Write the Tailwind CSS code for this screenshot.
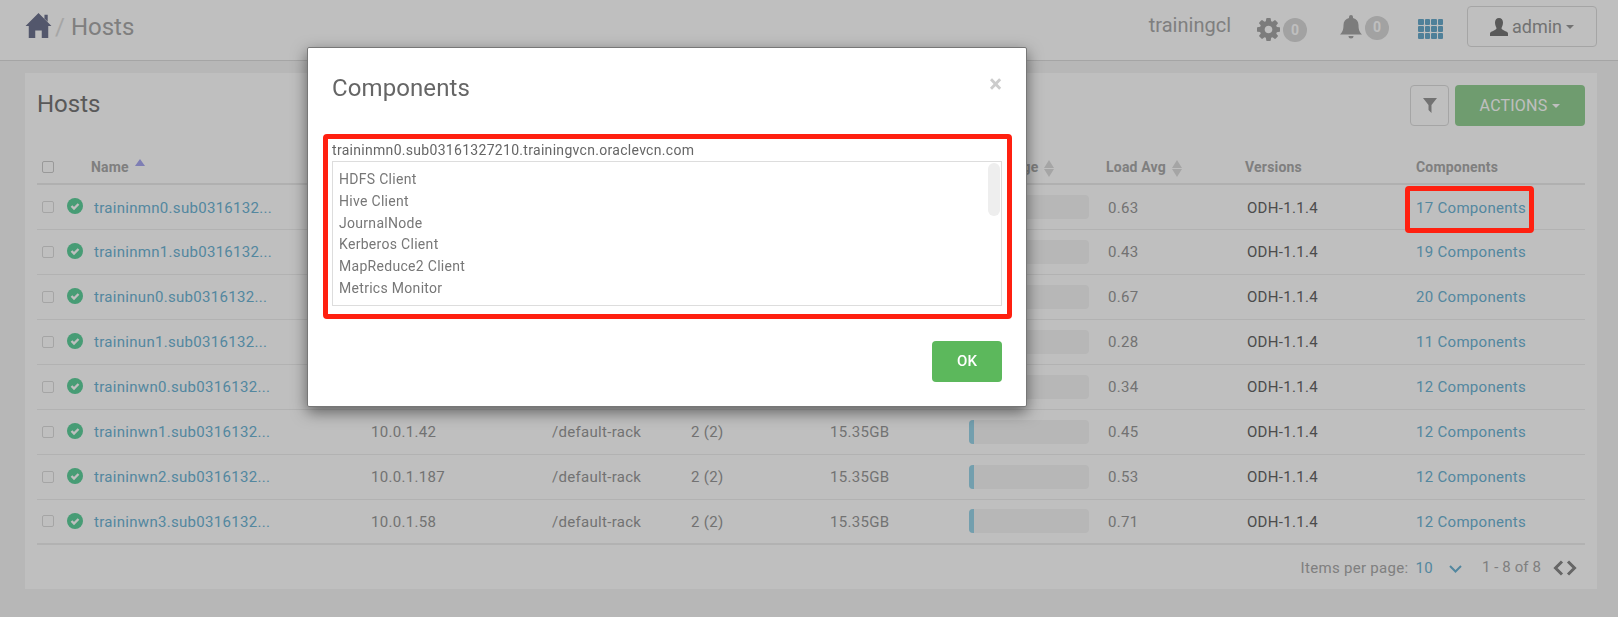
<!DOCTYPE html>
<html>
<head>
    <meta charset="UTF-8">
    <script src="https://cdn.jsdelivr.net/npm/@tailwindcss/browser@4"></script>
</head>
<body class="bg-[#f4f4f4] h-[617px] overflow-hidden text-[14px] text-[#999] font-['Roboto',sans-serif]">
    <!-- top bar -->
    <header class="h-[61px] bg-white border-b border-[#ddd] flex items-center pl-[25px] pr-[21px]">
        <svg class="w-[27px] h-[26px] mb-[11px] fill-[#6f7590]" viewBox="0 0 24 24"><path d="M12 1 24 13h-3v11h-6v-7H9v7H3V13H0Z"/><path d="M17.500 2.500h3v6.500l-3-3Z"/></svg>
        <span class="ml-[3px] mb-[7px] text-[24px] text-[#ddd]">/</span>
        <span class="ml-[6px] mb-[7px] text-[24px] text-[#aaa]">Hosts</span>
        <span class="ml-auto mb-[11px] text-[20px] text-[#aaa]">trainingcl</span>
        <svg class="ml-[26px] w-[23px] h-[23px] mt-[-1px] fill-[#a6a6a6]" viewBox="0 -128 1536 1536"><path d="M1024 640q0-106-75-181t-181-75-181 75-75 181 75 181 181 75 181-75 75-181zm512-109v222q0 12-8 23t-20 13l-185 28q-19 54-39 91 35 50 107 138 10 12 10 25t-9 23q-27 37-99 108t-94 71q-12 0-26-9l-138-108q-44 23-91 38-16 136-29 186-7 28-36 28h-222q-14 0-24.500-8.500t-11.500-21.500l-28-184q-49-16-90-37l-141 107q-10 9-25 9-14 0-25-11-126-114-165-168-7-10-7-23 0-12 8-23 15-21 51-66.500t54-70.500q-27-50-41-99l-183-27q-13-2-21-12.500t-8-23.500v-222q0-12 8-23t19-13l186-28q14-46 39-92-40-57-107-138-10-12-10-24 0-10 9-23 26-36 98.500-107.500t94.500-71.500q13 0 26 10l138 107q44-23 91-38 16-136 29-186 7-28 36-28h222q14 0 24.500 8.500t11.500 21.500l28 184q49 16 90 37l142-107q9-9 24-9 13 0 25 10 129 119 165 170 7 8 7 22 0 12-8 23-15 21-51 66.500t-54 70.500q26 50 41 98l183 28q13 2 21 12.500t8 23.500z"/></svg>
        <span class="ml-[3px] w-[24px] h-[24px] rounded-full bg-[#d8d8d8] text-white font-bold text-[14px] flex items-center justify-center">0</span>
        <svg class="ml-[32px] mb-[7px] w-[24px] h-[26px] fill-[#a6a6a6]" viewBox="0 0 24 24"><path d="M12 0a2 2 0 0 1 2 2v1c3.500.9 5.500 3.600 5.500 7 0 5.500 1.500 7.500 3.500 9.500H1c2-2 3.500-4 3.500-9.500 0-3.400 2-6.100 5.500-7V2a2 2 0 0 1 2-2Zm-2.500 21h5a2.500 2.500 0 0 1-5 0Z"/></svg>
        <span class="ml-[2px] mb-[5px] w-[24px] h-[24px] rounded-full bg-[#d8d8d8] text-white font-bold text-[14px] flex items-center justify-center">0</span>
        <div class="ml-[29px] mb-[3px] grid grid-cols-4 gap-[1px] w-[25px]">
            <i class="h-[6px] bg-[#6aabcc] rounded-[1px]"></i><i class="h-[6px] bg-[#6aabcc] rounded-[1px]"></i><i class="h-[6px] bg-[#6aabcc] rounded-[1px]"></i><i class="h-[6px] bg-[#6aabcc] rounded-[1px]"></i>
            <i class="h-[6px] bg-[#6aabcc] rounded-[1px]"></i><i class="h-[6px] bg-[#6aabcc] rounded-[1px]"></i><i class="h-[6px] bg-[#6aabcc] rounded-[1px]"></i><i class="h-[6px] bg-[#6aabcc] rounded-[1px]"></i>
            <i class="h-[6px] bg-[#6aabcc] rounded-[1px]"></i><i class="h-[6px] bg-[#6aabcc] rounded-[1px]"></i><i class="h-[6px] bg-[#6aabcc] rounded-[1px]"></i><i class="h-[6px] bg-[#6aabcc] rounded-[1px]"></i>
        </div>
        <button class="ml-[24px] mb-[7px] w-[130px] h-[41px] border border-[#ddd] rounded-[4px] flex items-center justify-center text-[18px] text-[#999]">
            <svg class="w-[18px] h-[18px] mr-[4px] fill-[#777]" viewBox="0 0 18 18"><path d="M9 0c2.500 0 4 2 4 4.500S12 9 11.500 10c0 1 .5 1.500 2.500 2.500s4 1.500 4 3V18H0v-2.500c0-1.500 2-2 4-3S6.500 11 6.500 10C6 9 5 7 5 4.500S6.500 0 9 0Z"/></svg>
            admin
            <i class="ml-[4px] border-x-[4px] border-x-transparent border-t-[4px] border-t-[#999]"></i>
        </button>
    </header>

    <main class="pt-[12px] px-[21px] pl-[25px]">
        <section class="bg-white w-[1572px] h-[516px] px-[12px]">
            <div class="h-[77px] flex justify-between pt-[12px]">
                <h1 class="text-[24px] text-[#777] mt-[1px]">Hosts</h1>
                <div class="flex gap-[6px]">
                    <button class="w-[39px] h-[41px] border border-[#ddd] rounded-[4px] flex items-center justify-center">
                        <svg class="w-[14px] h-[15px] fill-[#999]" viewBox="0 0 14 15"><path d="M0 0h14L8.500 7v8l-3-3V7Z"/></svg>
                    </button>
                    <button class="w-[130px] h-[41px] bg-[#95d195] rounded-[4px] text-white text-[16px] tracking-[0.2px] flex items-center justify-center">
                        ACTIONS<i class="ml-[5px] border-x-[4px] border-x-transparent border-t-[4px] border-t-white"></i>
                    </button>
                </div>
            </div>

            <table class="table-fixed w-[1548px] text-left border-collapse">
                <colgroup>
                    <col class="w-[23px]"><col class="w-[31px]"><col class="w-[277px]"><col class="w-[181px]"><col class="w-[139px]"><col class="w-[139px]"><col class="w-[139px]"><col class="w-[140px]"><col class="w-[139px]"><col class="w-[171px]"><col class="w-[169px]">
                </colgroup>
                <thead class="text-[14px] font-bold text-[#aaa] tracking-[0.2px]">
                    <tr class="h-[34px] border-b-2 border-[#ebebeb]">
                        <th class="pl-[5px]"><span class="block w-[12px] h-[12px] border border-[#ccc] rounded-[2px]"></span></th>
                        <th></th>
                        <th class="pt-[2px]">Name<i class="inline-block ml-[6px] mb-[6px] border-x-[5px] border-x-transparent border-b-[7px] border-b-[#a8a8f0]"></i></th>
                        <th class="pt-[2px]">IP Address</th>
                        <th class="pt-[2px]">Rack</th>
                        <th class="pt-[2px]">Cores</th>
                        <th class="pt-[2px]">RAM</th>
                        <th class="pt-[2px]">Disk Usage<span class="inline-flex flex-col gap-[1px] ml-[6px] align-middle"><i class="border-x-[5px] border-x-transparent border-b-[8px] border-b-[#ddd]"></i><i class="border-x-[5px] border-x-transparent border-t-[8px] border-t-[#ddd]"></i></span></th>
                        <th class="pt-[2px]">Load Avg<span class="inline-flex flex-col gap-[1px] ml-[6px] align-middle"><i class="border-x-[5px] border-x-transparent border-b-[8px] border-b-[#ddd]"></i><i class="border-x-[5px] border-x-transparent border-t-[8px] border-t-[#ddd]"></i></span></th>
                        <th class="pt-[2px]">Versions</th>
                        <th class="pt-[2px]">Components</th>
                    </tr>
                </thead>
                <tbody id="rows" class="text-[15px] tracking-[0.3px]"></tbody>
            </table>

            <div class="flex items-center justify-end h-[45px] pt-[2px] pr-[8px] text-[15px] tracking-[0.3px]">
                <span class="text-[#aaa]">Items per page:</span>
                <span class="ml-[7px] text-[#6fb5d5]">10</span>
                <svg class="ml-[16px] w-[13px] h-[8px] stroke-[#6fb5d5] fill-none stroke-2" viewBox="0 0 13 8"><path d="M1 1l5.500 5.500L12 1"/></svg>
                <span class="ml-[20px] mb-[2px] text-[#aaa] tracking-[0.1px]">1 - 8 of 8</span>
                <svg class="ml-[12px] mb-[2px] w-[11px] h-[16px] stroke-[#888] fill-none stroke-[3]" viewBox="0 0 11 16"><path d="M9 1.500 2.500 8 9 14.500"/></svg>
                <svg class="ml-[2px] mb-[2px] w-[11px] h-[16px] stroke-[#888] fill-none stroke-[3]" viewBox="0 0 11 16"><path d="M2 1.500 8.500 8 2 14.500"/></svg>
            </div>
        </section>
    </main>

    <!-- backdrop -->
    <div class="fixed inset-0 bg-black/25 z-10"></div>

    <!-- modal -->
    <div class="absolute z-20 left-[307px] top-[47px] w-[720px] h-[360px] bg-white border border-[#777] rounded-[2px] shadow-[0_5px_15px_rgba(0,0,0,0.5)]">
        <div class="h-[86px] pl-[24px] pr-[24px] flex justify-between">
            <h2 class="text-[24px] text-[#666] mt-[22px] tracking-[0.1px]">Components</h2>
            <span class="text-[24px] font-bold text-[#ccc] mt-[18px]">×</span>
        </div>
        <div class="ml-[15px] w-[689px] h-[185px] border-[5px] border-[#ff2010] rounded-[4px] px-[4px]">
            <div class="h-[22px] text-[14px] text-[#666] leading-[22px] tracking-[0.3px]">traininmn0.sub03161327210.trainingvcn.oraclevcn.com</div>
            <div class="relative h-[145px] w-[670px] border border-[#ddd] pl-[6px] pt-[7px] text-[14px] text-[#777] leading-[21.800px] tracking-[0.3px] overflow-hidden">
                <div>HDFS Client</div>
                <div>Hive Client</div>
                <div>JournalNode</div>
                <div>Kerberos Client</div>
                <div>MapReduce2 Client</div>
                <div>Metrics Monitor</div>
                <span class="absolute right-[1px] top-[1px] w-[12px] h-[53px] bg-[#eee] rounded-full"></span>
            </div>
        </div>
        <div class="flex justify-end pr-[24px] pt-[22px]">
            <button class="w-[70px] h-[41px] bg-[#5cb85c] rounded-[4px] text-white text-[15px] font-medium">OK</button>
        </div>
    </div>

    <!-- annotation round the 17 Components link -->
    <div class="absolute z-20 left-[1405px] top-[186px] w-[129px] h-[47px] border-[5px] border-[#ff2010] rounded-[4px]"></div>

    <script>
        const hosts = [
            ['traininmn0', '10.0.1.40', '0.63', 17],
            ['traininmn1', '10.0.1.41', '0.43', 19],
            ['traininun0', '10.0.1.43', '0.67', 20],
            ['traininun1', '10.0.1.44', '0.28', 11],
            ['traininwn0', '10.0.1.45', '0.34', 12],
            ['traininwn1', '10.0.1.42', '0.45', 12],
            ['traininwn2', '10.0.1.187', '0.53', 12],
            ['traininwn3', '10.0.1.58', '0.71', 12]
        ];
        document.getElementById('rows').innerHTML = hosts.map(h => `
            <tr class="h-[45px] border-b border-[#eee] last:border-b-2">
                <td class="pl-[5px]"><span class="block w-[12px] h-[12px] border border-[#ddd] rounded-[2px]"></span></td>
                <td class="pl-[7px]">
                    <svg class="w-[16px] h-[16px] mb-[1px]" viewBox="0 0 16 16"><circle cx="8" cy="8" r="8" fill="#5fd09c"/><path d="M4.500 8l2.500 2.500 4.500-4.500" fill="none" stroke="#fff" stroke-width="2.400"/></svg>
                </td>
                <td class="pl-[3px] pt-[2px] text-[#6fb5d5]">${h[0]}.sub0316132...</td>
                <td class="pl-[3px] pt-[2px]">${h[1]}</td>
                <td class="pl-[3px] pt-[2px]">/default-rack</td>
                <td class="pl-[3px] pt-[2px]">2 (2)</td>
                <td class="pl-[3px] pt-[2px]">15.35GB</td>
                <td class="pl-[3px]">
                    <div class="w-[120px] h-[24px] bg-[#f5f5f5] rounded-[4px] overflow-hidden"><div class="w-[5px] h-full bg-[#9ad4e8]"></div></div>
                </td>
                <td class="pl-[2px] pt-[2px]">${h[2]}</td>
                <td class="pl-[2px] pt-[2px] text-[#666]">ODH-1.1.4</td>
                <td class="pt-[2px] text-[#6fb5d5]">${h[3]} Components</td>
            </tr>
        `).join('');
    </script>
</body>
</html>
